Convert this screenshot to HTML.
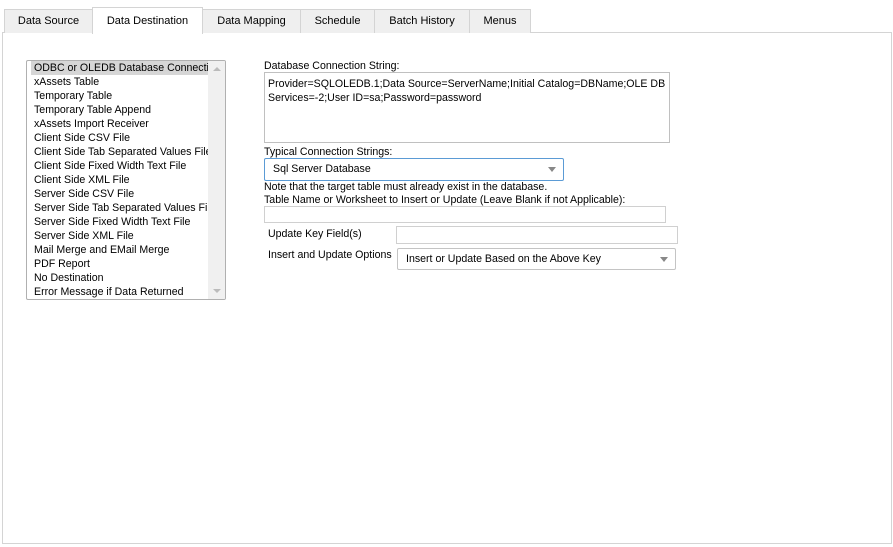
<!DOCTYPE html>
<html><head><style>
*{box-sizing:border-box}
body{margin:0;width:893px;height:547px;background:#fff;font-family:"Liberation Sans",sans-serif;font-size:10.6px;color:#000;position:relative;overflow:hidden}
.a{position:absolute;z-index:2;line-height:11px}
.tab{position:absolute;top:9px;height:24px;background:#efefef;border:1px solid #d4d4d4;border-bottom:none;text-align:center;line-height:23px;font-size:11px}
.panel{position:absolute;left:2px;top:32px;width:890px;height:512px;border:1px solid #d4d4d4;background:#fff}
.list{position:absolute;left:26px;top:60px;width:200px;height:240px;border:1px solid #b0b0b0;border-radius:2px;overflow:hidden}
.list div{height:14px;line-height:15px;padding-left:7px;white-space:nowrap;overflow:hidden;width:182px}
.sb{position:absolute;right:0;top:0;width:17px;height:100%;background:#f0f0f0}
.inp{position:absolute;border:1px solid #d0d0d0;background:#fff}
.sel{position:absolute;border:1px solid #c4c4c4;border-radius:2px;background:#fff;line-height:21px;padding-left:8px}
.arr{position:absolute;right:7px;top:8px;width:0;height:0;border-left:4px solid transparent;border-right:4px solid transparent;border-top:5px solid #888}
</style></head><body>
<div class="panel"></div>
<div class="tab" style="left:4px;width:89px">Data Source</div>
<div class="tab" style="left:92px;width:111px;top:7px;height:27px;background:#fff;line-height:27px">Data Destination</div>
<div class="tab" style="left:202px;width:99px">Data Mapping</div>
<div class="tab" style="left:300px;width:75px">Schedule</div>
<div class="tab" style="left:374px;width:96px">Batch History</div>
<div class="tab" style="left:469px;width:62px">Menus</div>

<div class="list">
<div style="background:#d6d6d6;margin-left:4px;padding-left:3px;width:178px">ODBC or OLEDB Database Connection</div>
<div>xAssets Table</div><div>Temporary Table</div><div>Temporary Table Append</div><div>xAssets Import Receiver</div><div>Client Side CSV File</div><div>Client Side Tab Separated Values File</div><div>Client Side Fixed Width Text File</div><div>Client Side XML File</div><div>Server Side CSV File</div><div>Server Side Tab Separated Values File</div><div>Server Side Fixed Width Text File</div><div>Server Side XML File</div><div>Mail Merge and EMail Merge</div><div>PDF Report</div><div>No Destination</div><div>Error Message if Data Returned</div>
<span class="sb"><span style="position:absolute;left:5px;top:6px;border-left:4px solid transparent;border-right:4px solid transparent;border-bottom:4px solid #bbb"></span><span style="position:absolute;left:5px;bottom:6px;border-left:4px solid transparent;border-right:4px solid transparent;border-top:4px solid #bbb"></span></span>
</div>

<div class="a" style="left:264px;top:61px">Database Connection String:</div>
<div class="inp" style="left:264px;top:72px;width:406px;height:71px;border-color:#c0c0c0;padding:4px 3px;line-height:14px">Provider=SQLOLEDB.1;Data Source=ServerName;Initial Catalog=DBName;OLE DB Services=-2;User ID=sa;Password=password</div>
<div class="a" style="left:264px;top:147px">Typical Connection Strings:</div>
<div class="sel" style="left:264px;top:158px;width:300px;height:23px;border-color:#5b9bd5">Sql Server Database<span class="arr"></span></div>
<div class="a" style="left:264px;top:182px">Note that the target table must already exist in the database.</div>
<div class="a" style="left:264px;top:195px">Table Name or Worksheet to Insert or Update (Leave Blank if not Applicable):</div>
<div class="inp" style="left:264px;top:206px;width:402px;height:17px"></div>
<div class="a" style="left:268px;top:229px">Update Key Field(s)</div>
<div class="inp" style="left:396px;top:226px;width:282px;height:18px"></div>
<div class="a" style="left:268px;top:250px">Insert and Update Options</div>
<div class="sel" style="left:397px;top:248px;width:279px;height:22px">Insert or Update Based on the Above Key<span class="arr"></span></div>
</body></html>
